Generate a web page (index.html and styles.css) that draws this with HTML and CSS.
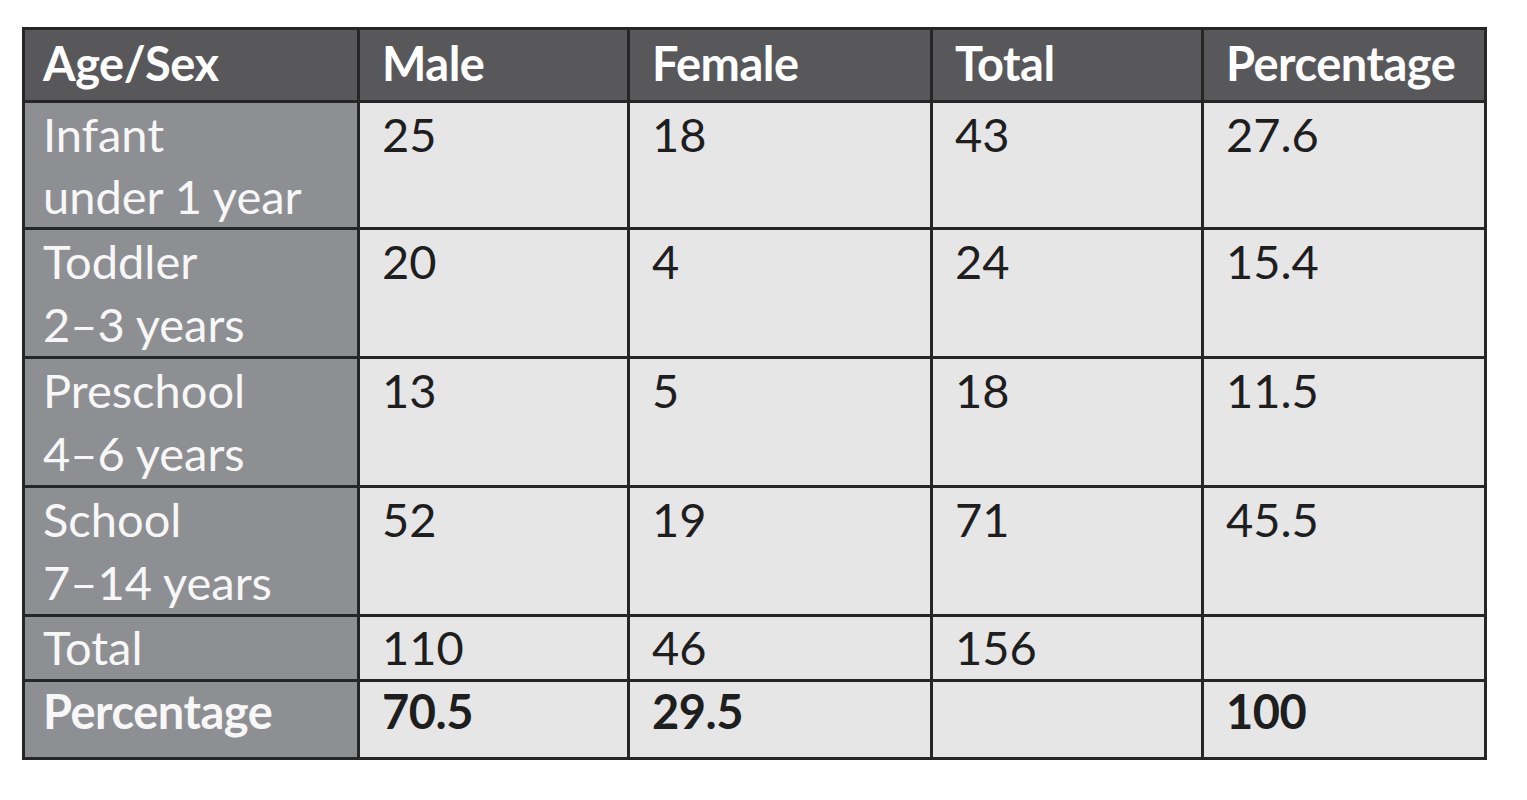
FILE: index.html
```html
<!DOCTYPE html>
<html>
<head>
<meta charset="utf-8">
<link rel="stylesheet" href="styles.css">
</head>
<body>
<div class="page">
<table class="data">
  <colgroup>
    <col class="c1"><col class="c2"><col class="c3"><col class="c4"><col class="c5">
  </colgroup>
  <thead>
    <tr class="head"><th>Age/Sex</th><th>Male</th><th>Female</th><th>Total</th><th>Percentage</th></tr>
  </thead>
  <tbody>
    <tr class="two first"><th>Infant<br>under 1 year</th><td>25</td><td>18</td><td>43</td><td>27.6</td></tr>
    <tr class="two"><th>Toddler<br>2–3 years</th><td>20</td><td>4</td><td>24</td><td>15.4</td></tr>
    <tr class="two"><th>Preschool<br>4–6 years</th><td>13</td><td>5</td><td>18</td><td>11.5</td></tr>
    <tr class="two"><th>School<br>7–14 years</th><td>52</td><td>19</td><td>71</td><td>45.5</td></tr>
    <tr class="one"><th>Total</th><td>110</td><td>46</td><td>156</td><td></td></tr>
    <tr class="pct"><th>Percentage</th><td>70.5</td><td>29.5</td><td></td><td>100</td></tr>
  </tbody>
</table>
</div>
</body>
</html>
```

FILE: styles.css
```css
html, body {
  margin: 0;
  padding: 0;
  background: #ffffff;
}
.page {
  padding: 27px 0 0 22px;
}
.data {
  border-collapse: collapse;
  table-layout: fixed;
  width: 1462px;
  font-family: Lato, "Liberation Sans", sans-serif;
  font-size: 47px;
  color: #1e1e1e;
  border: 3px solid #262626;
}
.c1 { width: 335px; }
.c2 { width: 270px; }
.c3 { width: 303px; }
.c4 { width: 271px; }
.c5 { width: 283px; }
.data th, .data td {
  border: 3px solid #262626;
  text-align: left;
  vertical-align: top;
  padding: 0 0 0 22px;
  line-height: 63px;
  font-weight: 400;
}
.data th {
  padding-left: 18px;
}
.data td {
  background: #e6e6e6;
}
.data tbody th {
  background: #8e8f93;
  color: #f7f7f7;
}
.head th {
  background: #58585b;
  color: #ffffff;
  font-weight: 700;
  height: 68px;
  padding-top: 2px;
  letter-spacing: -0.5px;
}
.head th:nth-child(n+2) {
  padding-left: 22px;
}
.two th, .two td {
  height: 126px;
  line-height: 63px;
}
.first th, .first td {
  height: 124px;
  line-height: 62px;
}
.one th, .one td {
  height: 62px;
  line-height: 60px;
}
.pct th, .pct td {
  height: 75px;
  line-height: 58px;
  font-weight: 700;
  letter-spacing: -0.5px;
}
```
